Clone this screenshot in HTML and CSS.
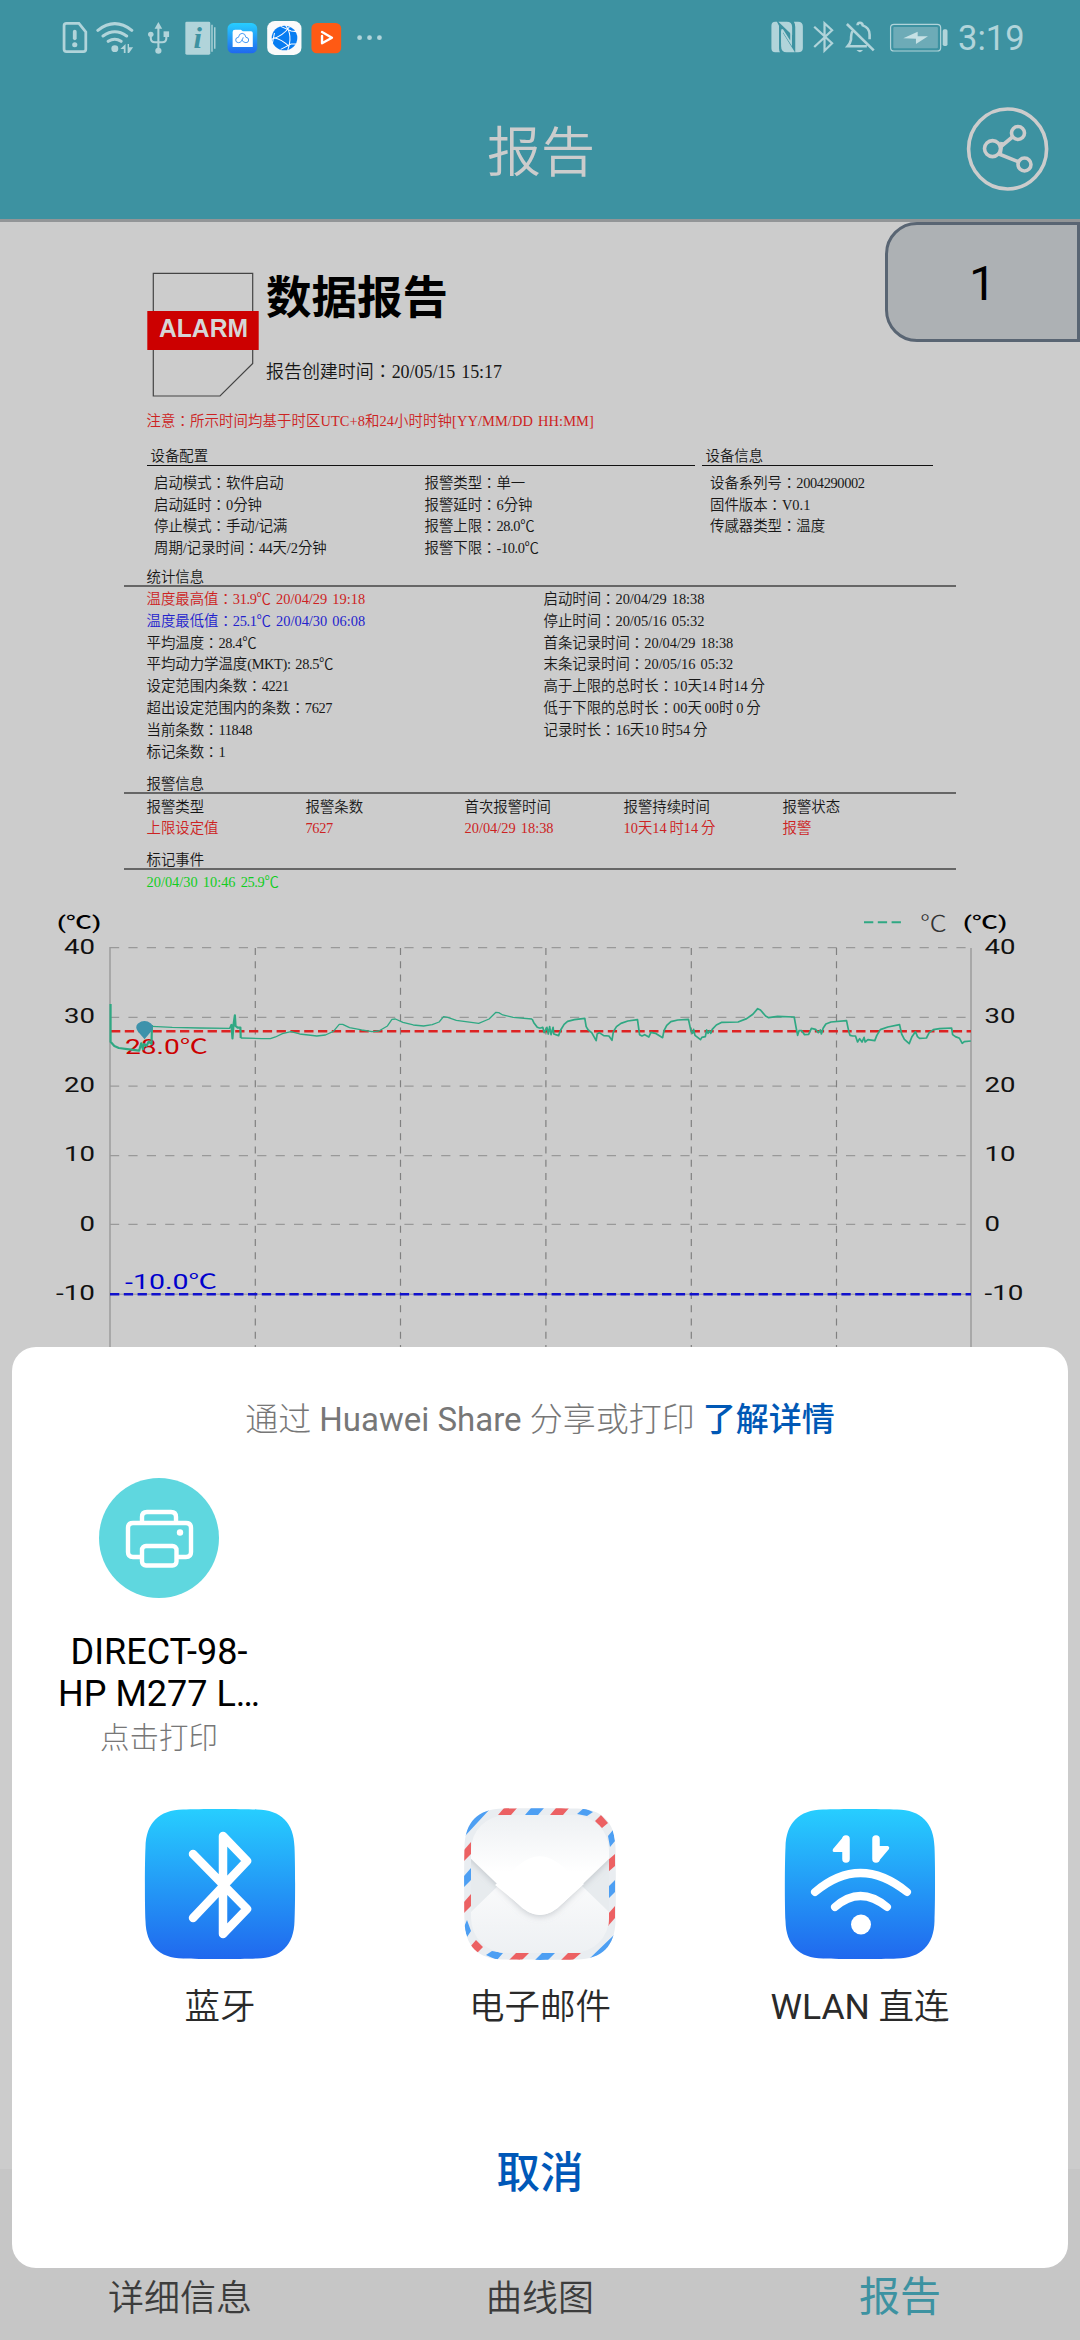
FILE: index.html
```html
<!DOCTYPE html>
<html lang="zh-CN">
<head>
<meta charset="utf-8">
<title>报告</title>
<link rel="stylesheet" href="styles.css">
</head>
<body>
<div class="screen">
  <header class="top">
    <div class="status">
      <div class="status-icons">
        <svg width="30" height="35" viewBox="180 60 87 105" preserveAspectRatio="none"><path d="M193 70h36l20 26v52q0 7-7 7h-49q-7 0-7-7v-71q0-7 7-7z" fill="none" stroke="#b1d4da" stroke-width="8"/><path d="M217 95v20" stroke="#b1d4da" stroke-width="11" stroke-linecap="round"/><circle cx="217" cy="134" r="7.500" fill="#b1d4da"/></svg>
        <svg width="46" height="35" viewBox="267 60 133 105" preserveAspectRatio="none"><g fill="none" stroke="#b1d4da" stroke-width="9" stroke-linecap="round"><path d="M284 91q49-40 98 0M299 108q34-25 68 0M314 124q19-13 37 0"/></g><circle cx="333" cy="146" r="10" fill="#b1d4da"/><path d="M349 147l15-15v27h-5v-12zM370 132h4v10h12l-12 17h-4z" fill="#b1d4da"/></svg>
        <svg width="38" height="35" viewBox="400 60 110 105" preserveAspectRatio="none"><path d="M459 78v74M437 103v12q0 12 12 12h21q12 0 12-12v-12" fill="none" stroke="#b1d4da" stroke-width="6"/><path d="M459 66l11 20h-22z" fill="#b1d4da"/><circle cx="437" cy="103" r="8" fill="#b1d4da"/><path d="M474 94h16v17h-16z" fill="#b1d4da"/><circle cx="459" cy="152" r="9" fill="#b1d4da"/></svg>
        <svg width="45" height="35" viewBox="510 60 130 105" preserveAspectRatio="none"><rect x="537" y="65" width="72" height="99" rx="4" fill="#b1d4da"/><path d="M614 74v81M622 82v64" stroke="#b1d4da" stroke-width="4"/><text class="info-i" x="573" y="143" text-anchor="middle">i</text></svg>
        <svg width="41" height="35" viewBox="640 60 120 105" preserveAspectRatio="none"><defs><linearGradient id="sky" x2="0" y2="1"><stop offset="0" stop-color="#27ceff"/><stop offset="1" stop-color="#2068ee"/></linearGradient></defs><rect x="659" y="69" width="87" height="91" rx="17" fill="url(#sky)"/><path d="M674 96q0-7 7-7h17l6 5h24q5 0 5 5v42h-59z" fill="#fff"/><path d="M691 128a8 8 0 0 1 0-16q2-12 11-12t11 12a8 8 0 0 1 0 16q-8 0-13-9M691 128q10 0 14-16" fill="none" stroke="#2788f2" stroke-width="2.500"/></svg>
        <svg width="45" height="35" viewBox="760 60 130 105" preserveAspectRatio="none"><rect x="775" y="63" width="99" height="102" rx="22" fill="#fafafa"/><circle cx="825" cy="114" r="37" fill="#087df2"/><path d="M787 118q34-10 52-37M793 113q24 4 46 27M828 76q22 28 6 76M814 79l30 14 17 2M814 148l30-16 15 0M796 99l-6 31" fill="none" stroke="#fff" stroke-width="3"/></svg>
        <svg width="41" height="35" viewBox="890 60 120 105" preserveAspectRatio="none"><rect x="903" y="69" width="87" height="91" rx="16" fill="#ff5a14"/><path d="M934 108v22l29-17-29-17" fill="none" stroke="#fff" stroke-width="7" stroke-linejoin="round" stroke-linecap="round"/></svg>
        <svg width="41" height="35" viewBox="1010 60 120 105" preserveAspectRatio="none"><g fill="#b1d4da"><circle cx="1044" cy="113" r="7"/><circle cx="1073" cy="113" r="7"/><circle cx="1102" cy="113" r="7"/></g></svg>
      </div>
      <div class="status-right">
        <svg width="38" height="35" viewBox="665 60 110 105" preserveAspectRatio="none"><path d="M683 65h5l6 12v68q0 8 3 12h-14q-11 0-11-12V77q0-12 11-12z" fill="#b1d4da"/><path d="M692 65h24q16 0 16 16v24zM700 90v48q0 19 16 19h24z" fill="#b1d4da"/><path d="M703 88l26 42V97M703 88v42" fill="none" stroke="#b1d4da" stroke-width="5"/><path d="M737 65h12q14 0 14 14v65q0 13-14 13h-8V81q0-10-4-16z" fill="#b1d4da"/></svg>
        <svg width="33" height="35" viewBox="775 60 96 105" preserveAspectRatio="none"><path d="M796 80l52 50-22 22V70l22 21-52 50" fill="none" stroke="#b1d4da" stroke-width="6.500"/></svg>
        <svg width="42" height="35" viewBox="871 60 122 105" preserveAspectRatio="none"><path d="M891 72l78 79M907 94q-4 6-4 25-2 10-10 20h56M922 76q0-8 7-8t8 8q20 7 20 28v14" fill="none" stroke="#b1d4da" stroke-width="7.500"/><path d="M919 150h19q-9 13-19 0z" fill="#b1d4da"/></svg>
        <svg width="71" height="35" viewBox="993 60 207 105" preserveAspectRatio="none"><rect x="1018" y="73" width="146" height="80" rx="10" fill="none" stroke="#b1d4da" stroke-width="3.500"/><rect x="1026" y="81" width="130" height="64" rx="3" fill="#6dabb7"/><rect x="1170" y="88" width="14" height="50" rx="5" fill="#b1d4da"/><path d="M1055 115l42-20v14h30l-35 23v-16z" fill="#c6e1e5"/></svg>
        <span class="clock">3:19</span>
      </div>
    </div>
    <div class="titlebar">
      <h1>报告</h1>
      <svg class="share" width="86" height="90" viewBox="0 0 86 90"><g fill="none" stroke="#ccc" stroke-width="3.600"><ellipse cx="43.600" cy="45" rx="39" ry="40"/><circle cx="28.500" cy="44.600" r="8"/><circle cx="54" cy="29" r="6.500"/><circle cx="60.500" cy="60.500" r="6.500"/><path d="M37 42.500l12-10M35 50l20 8M38 38l-2 13"/></g></svg>
    </div>
  </header>

  <main class="report" lang="zh-TW">
    <div class="page-no">1</div>
    <section class="head">
      <svg width="112" height="126" viewBox="147 272 112 126"><path d="M153.300 273.300h99.400v90.200L220 396h-66.700z" fill="none" stroke="#444" stroke-width="1.200"/><rect x="147.300" y="311" width="111.400" height="39" fill="#c00"/><text class="alarm" x="159" y="336.500" textLength="89" lengthAdjust="spacingAndGlyphs">ALARM</text></svg>
      <div class="head-text">
        <h2>数据报告</h2>
        <p>报告创建时间：20/05/15 15:17</p>
      </div>
    </section>
    <p class="note">注意：所示时间均基于时区UTC+8和24小时时钟[YY/MM/DD HH:MM]</p>
    <div class="device">
      <section class="config">
        <h3>设备配置</h3>
        <div class="two">
          <ul><li>启动模式：软件启动</li><li>启动延时：0分钟</li><li>停止模式：手动/记满</li><li>周期/记录时间：<span class="num">44</span>天/2分钟</li></ul>
          <ul><li>报警类型：单一</li><li>报警延时：6分钟</li><li>报警上限：<span class="num">28.0</span>℃</li><li>报警下限：<span class="num">-10.0</span>℃</li></ul>
        </div>
      </section>
      <section class="info">
        <h3>设备信息</h3>
        <ul><li>设备系列号：<span class="num">2004290002</span></li><li>固件版本：V0.1</li><li>传感器类型：温度</li></ul>
      </section>
    </div>
    <section class="block stats">
      <h3>统计信息</h3>
      <div class="cols">
        <ul><li class="red">温度最高值：<span class="num">31.9</span>℃ 20/04/29 19:18</li><li class="blue">温度最低值：<span class="num">25.1</span>℃ 20/04/30 06:08</li><li>平均温度：<span class="num">28.4</span>℃</li><li>平均动力学温度<span class="num">(MKT): 28.5</span>℃</li><li>设定范围内条数：<span class="num">4221</span></li><li>超出设定范围内的条数：<span class="num">7627</span></li><li>当前条数：<span class="num">11848</span></li><li>标记条数：1</li></ul>
        <ul><li>启动时间：20/04/29 18:38</li><li>停止时间：20/05/16 05:32</li><li>首条记录时间：20/04/29 18:38</li><li>末条记录时间：20/05/16 05:32</li><li class="tight">高于上限的总时长：10天14 时14 分</li><li class="tight">低于下限的总时长：00天 00时 0 分</li><li class="tight">记录时长：16天10 时54 分</li></ul>
      </div>
    </section>
    <section class="block alarms">
      <h3>报警信息</h3>
      <div class="grid">
        <span>报警类型</span><span>报警条数</span><span>首次报警时间</span><span>报警持续时间</span><span>报警状态</span>
        <span class="red">上限设定值</span><span class="red"><span class="num">7627</span></span><span class="red">20/04/29 18:38</span><span class="red tight">10天14 时14 分</span><span class="red">报警</span>
      </div>
    </section>
    <section class="block marks">
      <h3>标记事件</h3>
      <p class="green">20/04/30 10:46 <span class="num">25.9</span>℃</p>
    </section>
    <svg class="chart" lang="zh-CN" width="1080" height="457" viewBox="0 893 1080 457">
      <g stroke="#999" stroke-width="1.300" stroke-dasharray="9.200 9.200">
        <path d="M110 947.600H971M110 1017.300H971M110 1086.200H971M110 1155.600H971M110 1224.400H971" fill="none"/>
      </g>
      <g stroke="#808080" stroke-width="1.200" stroke-dasharray="7 6.230"><path d="M255.300 948V1350M400.500 948V1350M545.900 948V1350M691.300 948V1350M836.500 948V1350" fill="none"/></g>
      <path d="M110 947V1350M971 948V1350" stroke="#999" stroke-width="1.400"/>
      <path d="M110 1294.200H971" stroke="#999"/>
      <path d="M110 1031.200H971" stroke="#d22" stroke-width="2.400" stroke-dasharray="9.300 4.500" stroke-dashoffset="-1"/>
      <path d="M110 1294.200H971" stroke="#11c" stroke-width="2.400" stroke-dasharray="9.300 4.500"/>
      <g class="label">
        <text x="125" y="1054" fill="#c00" textLength="83" lengthAdjust="spacingAndGlyphs">28.0℃</text>
        <text x="125" y="1289" fill="#00c" textLength="92" lengthAdjust="spacingAndGlyphs">-10.0℃</text>
      </g>
      <g class="trace" transform="translate(0 890) scale(.3444 .3333)">
        <path class="bold" d="M321 342V455L332 468 345 474 375 478 404 482 410 460 415 478 418 462 425 468 432 455 440 462 441 405"/>
        <path d="M441 409L500 412 580 414 668 415"/>
        <path class="bold" d="M668 415L672 405 675 445 678 405 682 376 684 408 690 413 698 413 699 444"/>
        <path d="M699 444L760 446 785 446 800 441 820 431 845 425 870 432 920 438 945 435 968 424 985 403 995 403 1015 413 1050 420 1080 425 1100 423 1125 408 1138 388 1148 387 1170 397 1200 405 1230 408 1255 404 1275 396 1288 380 1300 382 1325 391 1390 400 1420 387 1440 367 1448 368 1460 375 1490 382 1545 387"/>
        <path class="mid" d="M1545 387L1550 398 1560 412 1568 415"/>
        <path class="mid" transform="translate(1568 0)" d="M0 415L8 412 12 428 20 412 24 432 28 410 32 434 38 412 40 432 54 437 60 420 70 403 80 394 100 389 130 385 134 410 140 420 150 428 163 452 166 432 172 428 185 437 200 438 209 451 213 425 222 410 235 400 255 393 283 389 289 434 296 438 304 434 316 441 322 427 335 430 356 443 360 422 368 406 380 395 400 390 431 388 438 422 443 430 446 418 450 436 466 449 470 442 480 440 484 420 488 430 492 422 496 430 500 418 512 405 528 397 575 396 600 386 618 373 632 356 640 360 655 378 664 383 690 379 738 381 744 415 748 436 752 422 760 422 768 434 780 433 788 415 800 418 808 428 814 420 817 432 822 415 830 402 845 396 890 392 894 412 898 430 900 436 908 438 916 438 922 456 928 446 935 456 941 442 944 456 952 449 972 452 978 436 988 419 1010 411 1044 404 1050 432 1058 448 1072 461 1080 440 1090 425 1096 440 1102 445 1122 444 1130 428 1142 419 1160 416 1195 414 1198 434 1206 440 1218 445 1226 460 1232 455 1251 453"/>
      </g>
      <path d="M144.500 1038l-6-7q-3-4 0-7 6-4.500 12 0 3 3 0 7z" fill="#3d92ab" stroke="#3d92ab" stroke-width="1.500"/>
      <path d="M864 922.300H901" stroke="#2fa883" stroke-width="2" stroke-dasharray="9.300 4.500"/>
      <g class="axis">
        <text x="57" y="929" textLength="44" lengthAdjust="spacingAndGlyphs" class="unit">(℃)</text>
        <text x="963" y="929" textLength="44" lengthAdjust="spacingAndGlyphs" class="unit">(℃)</text>
        <text x="920" y="931" textLength="27" lengthAdjust="spacingAndGlyphs" class="legend">℃</text>
        <text x="64" y="954" textLength="31" lengthAdjust="spacingAndGlyphs">40</text>
        <text x="64" y="1023" textLength="31" lengthAdjust="spacingAndGlyphs">30</text>
        <text x="64" y="1092" textLength="31" lengthAdjust="spacingAndGlyphs">20</text>
        <text x="64" y="1161" textLength="31" lengthAdjust="spacingAndGlyphs">10</text>
        <text x="79.500" y="1230.500" textLength="15.500" lengthAdjust="spacingAndGlyphs">0</text>
        <text x="56" y="1299.500" textLength="39" lengthAdjust="spacingAndGlyphs">-10</text>
        <text x="984.500" y="954" textLength="31" lengthAdjust="spacingAndGlyphs">40</text>
        <text x="984.500" y="1023" textLength="31" lengthAdjust="spacingAndGlyphs">30</text>
        <text x="984.500" y="1092" textLength="31" lengthAdjust="spacingAndGlyphs">20</text>
        <text x="984.500" y="1161" textLength="31" lengthAdjust="spacingAndGlyphs">10</text>
        <text x="984.500" y="1230.500" textLength="15.500" lengthAdjust="spacingAndGlyphs">0</text>
        <text x="984.500" y="1299.500" textLength="39" lengthAdjust="spacingAndGlyphs">-10</text>
      </g>
    </svg>
  </main>

  <nav class="tabs"><span>详细信息</span><span>曲线图</span><span class="on">报告</span></nav>

  <div class="sheet">
    <p class="sheet-title">通过 <span class="latin">Huawei Share</span> 分享或打印 <b>了解详情</b></p>
    <div class="printer">
      <svg width="120" height="120" viewBox="0 0 120 120"><circle cx="60" cy="60" r="60" fill="#5fd7df"/><g fill="none" stroke="#fff" stroke-width="4.400"><path d="M43 45v-6q0-5 5-5h24q5 0 5 5v6"/><path d="M43 79h-9q-5 0-5-5V50q0-5 5-5h53q5 0 5 5v24q0 5-5 5H77"/><rect x="43" y="68" width="34.500" height="19.500" rx="4"/></g><circle cx="81" cy="54.500" r="3.200" fill="#fff"/></svg>
      <div class="printer-name">DIRECT-98-<br>HP M277 L…</div>
      <div class="printer-hint">点击打印</div>
    </div>
    <div class="apps">
      <div class="app">
        <svg width="152" height="152" viewBox="0 0 152 152"><path class="tile" d="M39 1.500C55 .7 97 .7 113 1.500 137 2 150 15 150.500 39c.8 16 .8 58 0 74-.5 24-13.500 37-37.500 37.500-16 .8-58 .8-74 0C15 150 2 137 1.500 113 .7 97 .7 55 1.500 39 2 15 15 2 39 1.500z"/><path d="M49 46L103 101 79 126V28L103 53 49 110" fill="none" stroke="#fff" stroke-width="8.500" stroke-linejoin="round" stroke-linecap="round"/></svg>
        <span>蓝牙</span>
      </div>
      <div class="app">
        <svg width="152" height="152" viewBox="0 0 152 152"><defs><clipPath id="mail"><path d="M39 .5C55 0 97 0 113 .5 138 1 151 14 151.500 39c.5 16 .5 58 0 74-.5 25-13.500 38-38.500 38.500-16 .5-58 .5-74 0C14 151 1 138 .5 113 0 97 0 55 .5 39 1 14 14 1 39 .5z"/></clipPath><clipPath id="paper"><rect x="7" y="7" width="138" height="138" rx="35"/></clipPath><linearGradient id="flap" x2="0" y2="1"><stop offset="0" stop-color="#eceff2"/><stop offset=".6" stop-color="#fff"/></linearGradient><linearGradient id="fold" x2="0" y2="1"><stop offset="0" stop-color="#fff"/><stop offset="1" stop-color="#eceff2"/></linearGradient><filter id="soft" x="-20%" y="-20%" width="140%" height="150%"><feDropShadow dx="0" dy="2" stdDeviation="3" flood-color="#8a929a" flood-opacity=".4"/></filter></defs>
        <g clip-path="url(#mail)"><path d="M0 0h152v152H0z" fill="#e9edf1"/>
        <g fill="#ec6163"><path d="M40 0h13l-6 7H34zM92 0h13l-6 7H86zM131 13l6-6 7 8-6 5zM151 46v12l-7 6V52zM151 98v12l-7 8v-12zM0 42l7-8v12l-7 7zM0 94l7-8v12l-7 7zM6 139l6-7 7 7-7 7zM52 145h13l-7 7H45zM104 145h13l-8 7H97z"/></g>
        <g fill="#4d9ff3"><path d="M67 0h13l-6 7H61zM120 0l9 4-6 4-10-2zM149 22l2 11-5 6-2-11zM151 72v12l-7 7V79zM0 68l7-8v12l-7 7zM3 112l4 11-4 6-3-10zM28 143l11 2-6 7-11-5zM78 145h13l-7 7H71zM1 25Q6 6 26 1L1 28zM151 126v26h-27z"/></g>
        <g clip-path="url(#paper)"><path d="M7 7h138v138H7z" fill="#e7ebee"/><path d="M7 104L64 49Q76 39 88 49l57 55v50H7z" fill="url(#fold)"/><path d="M0 0h152v44L99 95Q76 119 53 95L0 44z" fill="url(#flap)" filter="url(#soft)"/><path d="M31 77L55 57Q76 39 98 58l22 18-21 19Q76 119 53 95z" fill="#fff"/></g></g></svg>
        <span>电子邮件</span>
      </div>
      <div class="app">
        <svg width="152" height="152" viewBox="0 0 152 152"><path class="tile" d="M39 1.500C55 .7 97 .7 113 1.500 137 2 150 15 150.500 39c.8 16 .8 58 0 74-.5 24-13.500 37-37.500 37.500-16 .8-58 .8-74 0C15 150 2 137 1.500 113 .7 97 .7 55 1.500 39 2 15 15 2 39 1.500z"/><g fill="none" stroke="#fff" stroke-width="8" stroke-linecap="round"><path d="M31 84Q76 46 123 84M51 99Q76 77 103 99"/><path d="M62 31v20M92 31v20" stroke-width="7.500"/></g><circle cx="77" cy="116.500" r="10" fill="#fff"/><path d="M60 28L49 41q-1 3 1 3h13zM94 54l11-13q1-2-1-3H91z" fill="#fff"/></svg>
        <span><span class="latin">WLAN</span> 直连</span>
      </div>
    </div>
    <div class="cancel">取消</div>
  </div>
</div>
</body>
</html>
```

FILE: styles.css
```css
* { box-sizing: border-box; margin: 0; padding: 0; }
body { background: #ccc; }
svg { display: block; flex: none; }
ul { list-style: none; }
.screen {
  position: relative;
  width: 1080px;
  height: 2340px;
  overflow: hidden;
  display: flex;
  flex-direction: column;
  background: #ccc;
  font-family: Roboto, "Noto Sans CJK SC", sans-serif;
}

/* status bar and title */
.top { height: 222px; background: #3d92a1; border-bottom: 3px solid #929597; }
.status { display: flex; justify-content: space-between; padding: 20px 57px 0 62px; height: 74px; }
.status-icons, .status-right { display: flex; }
.info-i { font: italic bold 88px "Liberation Serif", serif; fill: #3d92a1; }
.clock { font-size: 34.500px; line-height: 37px; color: #b1d4da; width: 70px; padding-left: 5px; }
.titlebar { position: relative; display: flex; justify-content: center; height: 145px; }
.titlebar h1 { font-size: 54px; font-weight: 350; line-height: 160px; color: #ccc; padding-left: 2px; }
.share { position: absolute; right: 30px; top: 30px; }

/* report page */
.report {
  position: relative;
  flex: none;
  height: 1128px;
  color: #161616;
  font: 350 14.400px/21.600px "Liberation Serif", "Noto Sans CJK TC", serif;
  white-space: nowrap;
  word-spacing: 1.500px;
}
.page-no {
  position: absolute; right: 0; top: 0;
  width: 195px; height: 120px;
  padding-top: 4px;
  border: 3px solid #596573;
  border-radius: 32px 0 0 32px;
  background: #adb1b4;
  color: #000;
  font: 48px/110px Roboto, sans-serif;
  text-align: center;
}
.head { display: flex; gap: 7px; padding: 50px 0 0 147px; height: 188px; }
.alarm { font: bold 25px "Liberation Sans", sans-serif; fill: #d6d6d6; }
.head h2 { font-size: 45.500px; line-height: 54px; font-weight: 700; color: #000; }
.head p { font-size: 18px; line-height: 26px; margin-top: 33px; letter-spacing: -.05px; }
.note { padding-left: 146.500px; line-height: 22px; height: 36px; color: #c22; letter-spacing: .1px; }
h3 { font-size: 14.400px; font-weight: 350; }
.device { display: flex; gap: 7px; padding-left: 147px; height: 121px; }
.device h3 { line-height: 21px; height: 20px; padding-left: 3.500px; border-bottom: 1px solid #111; margin-bottom: 7px; }
.config { width: 548px; }
.info { width: 231px; }
.two { display: grid; grid-template-columns: 270.500px 1fr; padding-left: 7px; }
.info ul { padding-left: 8px; }
.num { letter-spacing: -.37px; }
.tight { word-spacing: -.8px; }
.block { margin: 0 124px; }
.block h3 { line-height: 20px; height: 19.500px; padding-left: 22.500px; border-bottom: 2px solid #666; }
.stats { height: 207px; }
.cols { display: grid; grid-template-columns: 397px 1fr; padding: 2.500px 0 0 22.500px; line-height: 21.800px; }
.alarms { height: 76px; }
.grid { display: grid; grid-template-columns: repeat(5, 159px); padding: 3px 0 0 22.500px; line-height: 21px; }
.marks { height: 43px; }
.marks p { padding: 2px 0 0 22.500px; line-height: 21px; }
.red { color: #c22; }
.blue { color: #22c; }
.green { color: #1c2; }

/* chart */
.chart { word-spacing: 0; }
.chart text { font-family: Roboto, "Noto Sans CJK SC", sans-serif; font-weight: 400; }
.label { font-size: 20.500px; }
.axis { font-size: 19.700px; fill: #111; }
.axis .unit { font-weight: 500; font-size: 18.500px; fill: #000; }
.axis .legend { font-size: 22px; fill: #333; font-weight: 300; }
.trace { fill: none; stroke: #2fa883; stroke-width: 1.300px; stroke-linejoin: round; }
.trace path { vector-effect: non-scaling-stroke; }
.trace .mid { stroke-width: 1.700px; }
.trace .bold { stroke-width: 2.200px; }

/* bottom tabs */
.tabs {
  margin-top: auto;
  height: 171px;
  display: grid;
  grid-template-columns: repeat(3, 360px);
  padding-top: 100px;
  background: #c6c6c6;
  text-align: center;
  font-size: 36px;
  font-weight: 350;
  line-height: 60px;
  color: #3c3c3c;
}
.tabs .on { font-size: 41px; line-height: 56px; color: #3d92a1; font-weight: 400; }

/* share sheet */
.sheet {
  position: absolute; left: 12px; top: 1347px;
  width: 1056px; height: 921px;
  border-radius: 24px;
  background: #fff;
  display: flex;
  flex-direction: column;
}
.sheet-title { padding-top: 48px; height: 131px; font-size: 33px; font-weight: 300; line-height: 50px; color: #777; text-align: center; }
.sheet-title b { font-weight: 500; color: #0058b5; }
.latin { font-weight: 400; }
.printer { width: 230px; margin-left: 32px; height: 330px; display: flex; flex-direction: column; align-items: center; }
.printer-name { margin-top: 33px; font-size: 36px; line-height: 42px; color: #000; text-align: center; white-space: nowrap; }
.printer-hint { font-size: 29.500px; line-height: 42px; margin-top: 2px; font-weight: 300; color: #777; }
.apps { display: grid; grid-template-columns: repeat(3, 320px); padding: 0 48px; height: 330px; }
.app { display: flex; flex-direction: column; align-items: center; font-size: 35.500px; font-weight: 350; line-height: 50px; gap: 22px; color: #2a2a2a; }
.tile { fill: url(#sky); }
.cancel { font-size: 43.500px; font-weight: 500; line-height: 72px; text-align: center; color: #0058b8; }
```
